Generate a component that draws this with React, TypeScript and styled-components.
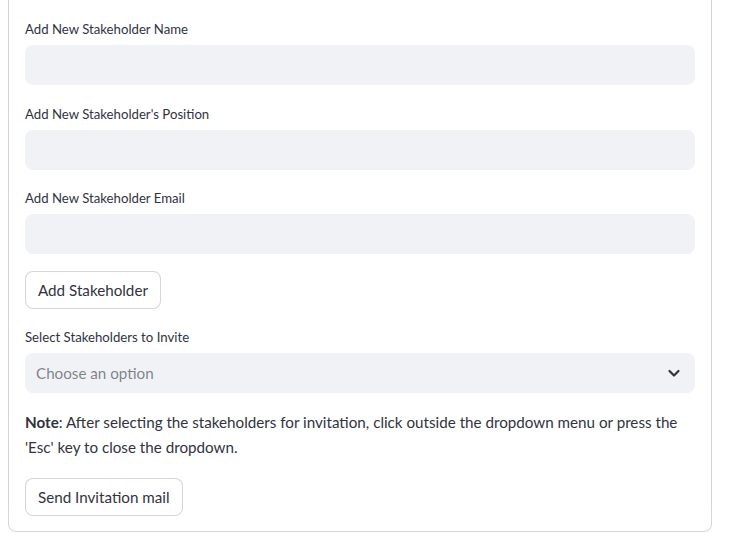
import React from "react";
import styled, { createGlobalStyle } from "styled-components";

const GlobalStyle = createGlobalStyle`
  html, body { background: #ffffff; }
  body {
    margin: 0 0 0 8px;
    font-family: "Lato", "Liberation Sans", sans-serif;
    color: #31333f;
  }
  * { box-sizing: border-box; }
`;

const FormBox = styled.form`
  width: 704px;
  display: flex;
  flex-direction: column;
  gap: 16.5px;
  padding: 17px 16px 15px;
  border: 1px solid rgba(49, 51, 63, 0.2);
  border-top: none;
  border-radius: 0 0 8px 8px;
`;

const Field = styled.div`
  display: flex;
  flex-direction: column;
`;

const Label = styled.label`
  display: flex;
  align-items: center;
  height: 24px;
  margin-bottom: 4px;
  font-size: 13.2px;
  color: #31333f;
`;

const TextInput = styled.input`
  height: 40px;
  width: 100%;
  border: none;
  outline: none;
  border-radius: 8px;
  background: #f0f2f6;
  padding: 0 11px;
  font-family: inherit;
  font-size: 15.2px;
  color: #31333f;
`;

const SelectBox = styled.div`
  height: 40px;
  display: flex;
  align-items: center;
  justify-content: space-between;
  border-radius: 8px;
  background: #f0f2f6;
  padding: 0 14px 0 11px;
  cursor: pointer;
`;

const Placeholder = styled.span`
  font-size: 15.2px;
  color: rgba(49, 51, 63, 0.6);
`;

const Chevron = styled.svg`
  width: 14px;
  height: 14px;
  display: block;
`;

const Button = styled.button`
  align-self: flex-start;
  height: 38.4px;
  padding: 0 12px;
  background: #ffffff;
  border: 1px solid rgba(49, 51, 63, 0.2);
  border-radius: 8px;
  font-family: inherit;
  font-size: 15.2px;
  color: #31333f;
  cursor: pointer;
`;

const Note = styled.p`
  margin: 0;
  font-size: 15.2px;
  line-height: 25.6px;
  color: #31333f;
`;

const Strong = styled.strong`
  font-weight: 700;
`;

const fields = [
  "Add New Stakeholder Name",
  "Add New Stakeholder's Position",
  "Add New Stakeholder Email",
];

export default function App() {
  return (
    <>
      <GlobalStyle />
      <FormBox onSubmit={(e) => e.preventDefault()}>
        {fields.map((f) => (
          <Field key={f}>
            <Label>{f}</Label>
            <TextInput type="text" />
          </Field>
        ))}
        <Button type="button">Add Stakeholder</Button>
        <Field>
          <Label>Select Stakeholders to Invite</Label>
          <SelectBox>
            <Placeholder>Choose an option</Placeholder>
            <Chevron viewBox="0 0 14 14" fill="none">
              <path d="M2.5 5 L7 9.5 L11.5 5" stroke="#31333f" strokeWidth="2.2" strokeLinecap="round" strokeLinejoin="round" />
            </Chevron>
          </SelectBox>
        </Field>
        <Note>
          <Strong>Note</Strong>: After selecting the stakeholders for invitation, click outside the dropdown menu or press the 'Esc' key to close the dropdown.
        </Note>
        <Button type="button">Send Invitation mail</Button>
      </FormBox>
    </>
  );
}
